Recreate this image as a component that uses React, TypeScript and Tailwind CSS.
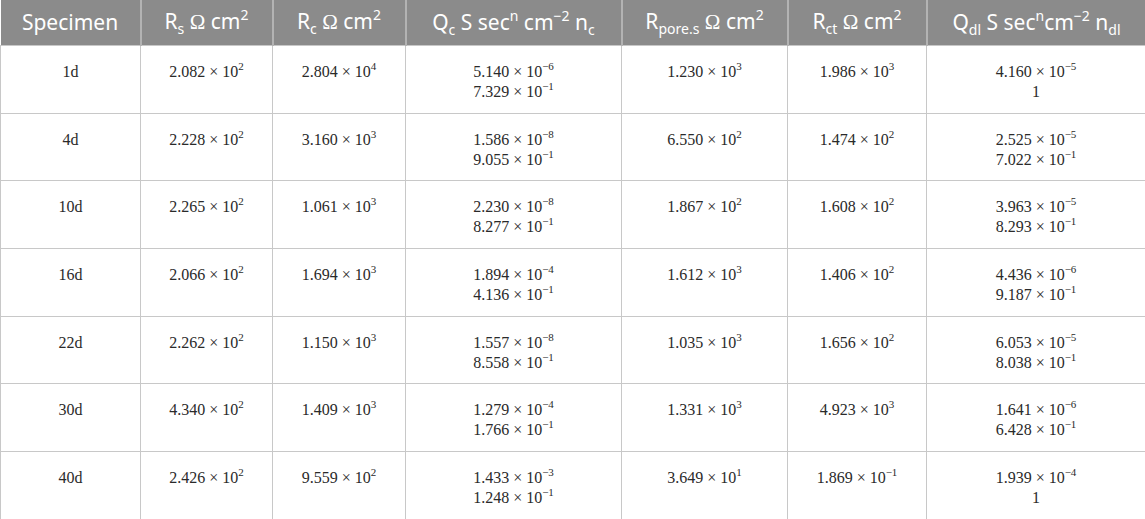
import React from 'react';

type Val = { m: string; e: string };
type Row = {
    name: string;
    rs: Val;
    rc: Val;
    qc: Val[];
    rpore: Val;
    rct: Val;
    qdl: (Val | string)[];
    h: string;
};

const v = (m: string, e: string): Val => ({ m, e });

const rows: Row[] = [
    { name: '1d', rs: v('2.082', '2'), rc: v('2.804', '4'), qc: [v('5.140', '−6'), v('7.329', '−1')], rpore: v('1.230', '3'), rct: v('1.986', '3'), qdl: [v('4.160', '−5'), '1'], h: 'h-[68px]' },
    { name: '4d', rs: v('2.228', '2'), rc: v('3.160', '3'), qc: [v('1.586', '−8'), v('9.055', '−1')], rpore: v('6.550', '2'), rct: v('1.474', '2'), qdl: [v('2.525', '−5'), v('7.022', '−1')], h: 'h-[67px]' },
    { name: '10d', rs: v('2.265', '2'), rc: v('1.061', '3'), qc: [v('2.230', '−8'), v('8.277', '−1')], rpore: v('1.867', '2'), rct: v('1.608', '2'), qdl: [v('3.963', '−5'), v('8.293', '−1')], h: 'h-[68px]' },
    { name: '16d', rs: v('2.066', '2'), rc: v('1.694', '3'), qc: [v('1.894', '−4'), v('4.136', '−1')], rpore: v('1.612', '3'), rct: v('1.406', '2'), qdl: [v('4.436', '−6'), v('9.187', '−1')], h: 'h-[68px]' },
    { name: '22d', rs: v('2.262', '2'), rc: v('1.150', '3'), qc: [v('1.557', '−8'), v('8.558', '−1')], rpore: v('1.035', '3'), rct: v('1.656', '2'), qdl: [v('6.053', '−5'), v('8.038', '−1')], h: 'h-[67px]' },
    { name: '30d', rs: v('4.340', '2'), rc: v('1.409', '3'), qc: [v('1.279', '−4'), v('1.766', '−1')], rpore: v('1.331', '3'), rct: v('4.923', '3'), qdl: [v('1.641', '−6'), v('6.428', '−1')], h: 'h-[68px]' },
    { name: '40d', rs: v('2.426', '2'), rc: v('9.559', '2'), qc: [v('1.433', '−3'), v('1.248', '−1')], rpore: v('3.649', '1'), rct: v('1.869', '−1'), qdl: [v('1.939', '−4'), '1'], h: 'h-[68px]' },
];

const Num = ({ val }: { val: Val | string }) =>
    typeof val === 'string' ? (
        <div>{val}</div>
    ) : (
        <div>
            {val.m} × 10<sup className="text-[11px] -top-[7px]">{val.e}</sup>
        </div>
    );

const thCls = 'border-l-2 border-[#b3b3b3] first:border-l-0 font-normal text-white text-[21px] leading-none px-2';
const tdCls = 'border border-[#c8c8c8] align-top text-center pt-[16px] leading-[20px]';
const hsub = 'text-[14px] -bottom-[5px]';
const hsup = 'text-[14px] -top-[9px]';

// omega in the header is set in a serif face, like the source
const Om = () => <span className="font-['Liberation_Serif',serif]">Ω</span>;

const App: React.FC = () => {
    return (
        <div className="w-[1145px] h-[519px] bg-white overflow-hidden">
            <table className="w-[1145px] table-fixed border-collapse">
                <colgroup>
                    <col className="w-[140px]" />
                    <col className="w-[132px]" />
                    <col className="w-[133px]" />
                    <col className="w-[216px]" />
                    <col className="w-[166px]" />
                    <col className="w-[139px]" />
                    <col className="w-[219px]" />
                </colgroup>
                <thead>
                    <tr className="h-[45px] bg-[#8b8b8b] font-['Noto_Sans','Open_Sans',sans-serif]">
                        <th className={thCls}>Specimen</th>
                        <th className={thCls}>
                            R<sub className={hsub}>s</sub> <Om /> cm<sup className={hsup}>2</sup>
                        </th>
                        <th className={thCls}>
                            R<sub className={hsub}>c</sub> <Om /> cm<sup className={hsup}>2</sup>
                        </th>
                        <th className={thCls}>
                            Q<sub className={hsub}>c</sub> S sec<sup className={hsup}>n</sup> cm<sup className={hsup}>−2</sup> n<sub className={hsub}>c</sub>
                        </th>
                        <th className={thCls}>
                            R<sub className={hsub}>pore.s</sub> <Om /> cm<sup className={hsup}>2</sup>
                        </th>
                        <th className={thCls}>
                            R<sub className={hsub}>ct</sub> <Om /> cm<sup className={hsup}>2</sup>
                        </th>
                        <th className={thCls}>
                            Q<sub className={hsub}>dl</sub> S sec<sup className={hsup}>n</sup>cm<sup className={hsup}>−2</sup> n<sub className={hsub}>dl</sub>
                        </th>
                    </tr>
                </thead>
                <tbody className="font-['Liberation_Serif',serif] text-[16px] text-[#2a2a2a]">
                    {rows.map((r) => (
                        <tr key={r.name} className={r.h}>
                            <td className={tdCls}>{r.name}</td>
                            <td className={tdCls}><Num val={r.rs} /></td>
                            <td className={tdCls}><Num val={r.rc} /></td>
                            <td className={tdCls}>{r.qc.map((q, i) => <Num key={i} val={q} />)}</td>
                            <td className={tdCls}><Num val={r.rpore} /></td>
                            <td className={tdCls}><Num val={r.rct} /></td>
                            <td className={tdCls}>{r.qdl.map((q, i) => <Num key={i} val={q} />)}</td>
                        </tr>
                    ))}
                </tbody>
            </table>
        </div>
    );
};

export default App;
